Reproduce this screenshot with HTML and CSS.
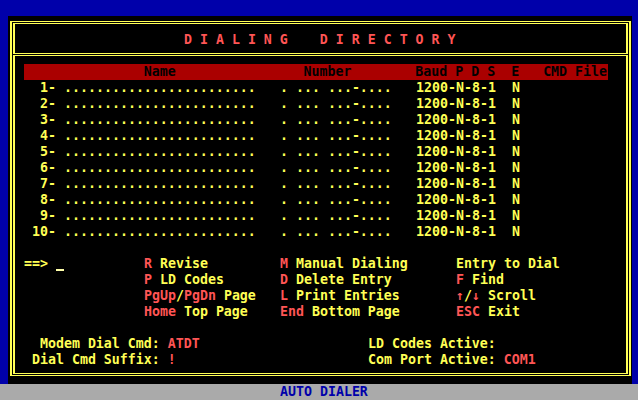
FILE: index.html
```html
<!DOCTYPE html>
<html>
<head>
<meta charset="utf-8">
<title>Dialing Directory</title>
<link rel="stylesheet" href="styles.css">
</head>
<body>
<div class="screen">
  <div class="window">
    <div class="frame">
      <div class="panel title-panel"><div class="title">D I A L I N G    D I R E C T O R Y</div></div>
      <div class="panel body-panel">
        <div class="head-bar">               Name                Number        Baud P D S  E   CMD File</div>
        <div class="entries">
          <div class="entry"><span class="idx">1</span><span>-</span><span>........................</span><span>. ... ...-....</span><span>1200-N-8-1</span><span>N</span></div>
          <div class="entry"><span class="idx">2</span><span>-</span><span>........................</span><span>. ... ...-....</span><span>1200-N-8-1</span><span>N</span></div>
          <div class="entry"><span class="idx">3</span><span>-</span><span>........................</span><span>. ... ...-....</span><span>1200-N-8-1</span><span>N</span></div>
          <div class="entry"><span class="idx">4</span><span>-</span><span>........................</span><span>. ... ...-....</span><span>1200-N-8-1</span><span>N</span></div>
          <div class="entry"><span class="idx">5</span><span>-</span><span>........................</span><span>. ... ...-....</span><span>1200-N-8-1</span><span>N</span></div>
          <div class="entry"><span class="idx">6</span><span>-</span><span>........................</span><span>. ... ...-....</span><span>1200-N-8-1</span><span>N</span></div>
          <div class="entry"><span class="idx">7</span><span>-</span><span>........................</span><span>. ... ...-....</span><span>1200-N-8-1</span><span>N</span></div>
          <div class="entry"><span class="idx">8</span><span>-</span><span>........................</span><span>. ... ...-....</span><span>1200-N-8-1</span><span>N</span></div>
          <div class="entry"><span class="idx">9</span><span>-</span><span>........................</span><span>. ... ...-....</span><span>1200-N-8-1</span><span>N</span></div>
          <div class="entry"><span class="idx">10</span><span>-</span><span>........................</span><span>. ... ...-....</span><span>1200-N-8-1</span><span>N</span></div>
        </div>
        <div class="menu">
          <div class="prompt"> ==> <span class="cursor"></span></div>
          <div><span class="key">R</span> Revise</div>
          <div><span class="key">M</span> Manual Dialing</div>
          <div>Entry to Dial</div>
          <div><span class="key">P</span> LD Codes</div>
          <div><span class="key">D</span> Delete Entry</div>
          <div><span class="key">F</span> Find</div>
          <div><span class="key">PgUp</span>/<span class="key">PgDn</span> Page</div>
          <div><span class="key">L</span> Print Entries</div>
          <div><span class="key">↑</span>/<span class="key">↓</span> Scroll</div>
          <div><span class="key">Home</span> Top Page</div>
          <div><span class="key">End</span> Bottom Page</div>
          <div><span class="key">ESC</span> Exit</div>
        </div>
        <div class="settings">
          <div>   Modem Dial Cmd: <span class="key">ATDT</span></div>
          <div>LD Codes Active:</div>
          <div>  Dial Cmd Suffix: <span class="key">!</span></div>
          <div>Com Port Active: <span class="key">COM1</span></div>
        </div>
      </div>
    </div>
  </div>
  <div class="status">AUTO DIALER</div>
</div>
</body>
</html>
```
FILE: styles.css
```css
html, body {
  margin: 0;
  padding: 0;
  background: #0000aa;
  overflow: hidden;
}

.screen {
  width: 640px;
  height: 400px;
  box-sizing: border-box;
  padding-top: 16px;
  display: flex;
  flex-direction: column;
  font-family: "DejaVu Sans Mono", monospace;
  font-weight: bold;
  font-size: 13.28px;
  line-height: 16px;
  color: #ffff55;
}

.window {
  flex: none;
  margin-left: 8px;
  width: 624px;
  height: 368px;
  box-sizing: border-box;
  padding: 5px 0 0 2px;
  background: #000;
}

.frame {
  width: 621px;
  height: 355px;
  box-sizing: border-box;
  border: solid #ffff55;
  border-width: 1px 2px;
  padding: 1px;
}

.panel {
  box-sizing: border-box;
  border: solid #ffff55;
  border-width: 1px 2px;
}

.title-panel {
  height: 31px;
  margin-bottom: 1px;
  padding: 8px 0 0 169px;
  color: #ff5555;
}

.title,
.head-bar,
.entry > span,
.menu > div,
.settings > div,
.status {
  white-space: pre;
  height: 16px;
}

.body-panel {
  height: 319px;
  padding: 8px 0 0 1px;
}

.head-bar {
  margin-left: 8px;
  width: 584px;
  background: #aa0000;
  color: #000;
}

.entry {
  display: grid;
  grid-template-columns: 32px 16px 216px 136px 96px 8px;
  height: 16px;
}

.idx {
  text-align: right;
}

.menu {
  margin-top: 16px;
  display: grid;
  grid-template-columns: 128px 136px 176px 1fr;
  grid-auto-rows: 16px;
}

.menu > .prompt {
  grid-row: span 4;
  height: auto;
}

.cursor {
  display: inline-block;
  width: 8px;
  height: 2px;
  background: #ffffaa;
  vertical-align: -3px;
}

.key {
  color: #ff5555;
}

.settings {
  margin-top: 16px;
  display: grid;
  grid-template-columns: 352px 1fr;
  grid-auto-rows: 16px;
}

.status {
  flex: none;
  padding-left: 280px;
  background: #aaaaaa;
  color: #0000aa;
}
```
